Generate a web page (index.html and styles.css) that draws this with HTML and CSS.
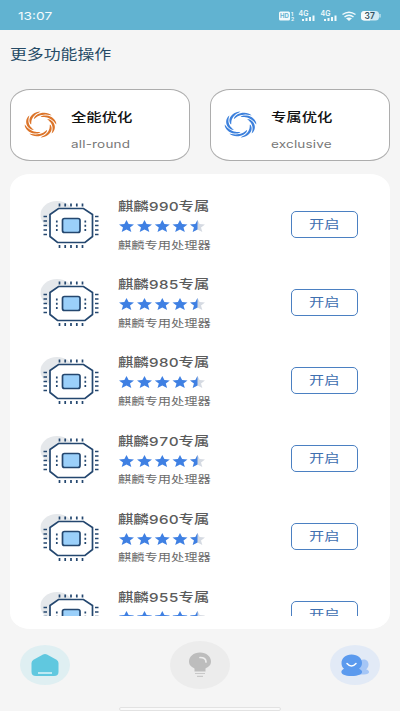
FILE: index.html
```html
<!DOCTYPE html>
<html lang="zh-CN">
<head>
<meta charset="utf-8">
<title>更多功能操作</title>
<link rel="stylesheet" href="styles.css">
</head>
<body>
<svg class="defs" aria-hidden="true">
  <symbol id="swirl" viewBox="-13 -13 26 26" preserveAspectRatio="none">
    <g id="blades"></g>
  </symbol>
  <symbol id="chip" viewBox="0 0 60 48">
    <ellipse cx="17" cy="15" rx="16.5" ry="14" fill="#e5e8eb"/>
    <path d="M18.500 8.500H43.500L52.500 14.500V36.500L45 42.500H17.500L10 36.500V14.500Z" fill="#fff" stroke="#24476f" stroke-width="1.700"/>
    <path d="M19.500 3.500v3M25.200 3.500v3M31 3.500v3M36.800 3.500v3M42.500 3.500v3M19.500 45v3M25.200 45v3M31 45v3M36.800 45v3M42.500 45v3M3.500 16.500h3.500M3.500 21h3.500M3.500 25.500h3.500M3.500 30h3.500M3.500 34.500h3.500M55 16.500h3.500M55 21h3.500M55 25.500h3.500M55 30h3.500M55 34.500h3.500" stroke="#24476f" stroke-width="1.700"/>
    <path d="M16.800 20.500v11M45.300 20.500v11" stroke="#24476f" stroke-width="1.700" stroke-dasharray="2 2.300"/>
    <rect x="22.500" y="18.500" width="17.500" height="14" rx="2" fill="#9bd0fa" stroke="#24476f" stroke-width="1.700"/>
  </symbol>
  <symbol id="stars" viewBox="0 0 88 12">
    <defs><path id="star" d="M7.500 0L9.600 4L15 4.500L11 7.600L12.300 12L7.500 9.600L2.700 12L4 7.600L0 4.500L5.400 4Z"/></defs>
    <g fill="#3f80e3"><use href="#star"/><use href="#star" x="18"/><use href="#star" x="35.800"/><use href="#star" x="53.500"/></g>
    <use href="#star" x="71" fill="#d5dae2"/>
    <path d="M78.500 0V9.600L73.700 12L75 7.600L71 4.500L76.400 4Z" fill="#3f80e3"/>
  </symbol>
</svg>
<header class="status">
  <span class="clock"><span class="wide">13:07</span></span>
  <svg class="signals" width="106" height="14" viewBox="0 0 106 14">
    <rect x="1" y="2.500" width="11" height="9" rx="1.500" fill="#f2fafc"/>
    <text x="2" y="9.400" class="hd">HD</text>
    <text x="13" y="6.500" class="tiny">1</text><text x="13" y="12" class="tiny">2</text>
    <text x="20.500" y="7" class="net">4G</text><text x="42.500" y="7" class="net">4G</text>
    <path d="M25 12v-2M28.500 12v-3M32 12v-4M35.500 12v-5.500M47 12v-2M50.500 12v-3M54 12v-4M57.500 12v-5.500" stroke="#f2fafc" stroke-width="2"/>
    <g fill="none" stroke="#f2fafc" stroke-width="1.500"><path d="M64.500 5.500Q71 .8 77.500 5.500M66.500 8Q71 4.500 75.500 8"/></g>
    <path d="M68 9.300Q71 7.700 74 9.300L71 12Z" fill="#f2fafc"/>
    <rect x="83" y="2" width="18" height="9.500" rx="3.500" fill="#cfe9f2"/><path d="M88 2H86.500A3.500 3.500 0 0 0 83 5.500V8a3.500 3.500 0 0 0 3.500 3.500H92V2Z" fill="#f4fafc"/>
    <path d="M102 5v3.500" stroke="#b9deea" stroke-width="1.500"/>
    <text x="86.500" y="9.700" class="battery">37</text>
  </svg>
</header>
<h1 class="heading"><span class="wide">更多功能操作</span></h1>
<section class="modes">
  <div class="mode orange"><svg class="swirl"><use href="#swirl"/></svg><div><b class="wide">全能优化</b><span class="wide">all-round</span></div></div>
  <div class="mode blue"><svg class="swirl"><use href="#swirl"/></svg><div><b class="wide">专属优化</b><span class="wide">exclusive</span></div></div>
</section>
<main class="panel"><div class="list" id="list"></div></main>
<nav class="tabs">
  <a class="tab home"><svg width="28" height="24" viewBox="0 0 28 24"><path d="M12 1.500Q14 .5 16 1.500L25.500 6.800Q27.500 8 27.500 10V19Q27.500 23 23 23H5Q.5 23 .5 19V10Q.5 8 2.500 6.800Z" fill="#60c8df"/><path d="M7 20h14" stroke="#c8edf5" stroke-width="1.800"/></svg></a>
  <a class="tab tips"><svg width="24" height="26" viewBox="0 0 24 26"><path d="M12 .5C18.500.5 23 4.500 23 9.500C23 13.500 20.500 14.500 17.500 16.500V19.500H6.500V16.500C3.500 14.500 1 13.500 1 9.500C1 4.500 5.500.5 12 .5Z" fill="#bdbdbd"/><path d="M12 5.500Q18 5.500 18 10" fill="none" stroke="#ededed" stroke-width="1.700" stroke-linecap="round"/><path d="M7 21.500h10M9 24.300h6" stroke="#c9c9c9" stroke-width="1.200"/></svg></a>
  <a class="tab users"><svg width="29" height="24" viewBox="0 0 29 24"><path d="M19 7.500C24 5 28 8 27.500 12C27.300 14.500 26 15.500 25 16.300C30 18 28.500 21.500 23 21.500H17Z" fill="#a5c6f6"/><path d="M10.500 1.500C17 1.500 21 5.500 21 10C21 12.800 19.500 14.700 18 15.800C24 18.500 21 23 10.500 23S-2 18.500 3 15.800C1.500 14.700.5 12.800.5 10C.5 5.500 4.500 1.500 10.500 1.500Z" fill="#5b9aee"/><path d="M6 10.500Q10.500 15.500 15 10.500" fill="none" stroke="#fff" stroke-width="1.500" stroke-linecap="round"/></svg></a>
</nav>
<div class="gesture"></div>
<script src="app.js"></script>
</body>
</html>
```
FILE: styles.css
```css
* { box-sizing: border-box; }
body {
  margin: 0;
  width: 400px;
  height: 711px;
  overflow: hidden;
  display: flex;
  flex-direction: column;
  background: #f5f5f5;
  font-family: Inter, "Noto Sans CJK SC", sans-serif;
}
.defs { position: absolute; width: 0; height: 0; }
.wide {
  display: block;
  width: max-content;
  white-space: nowrap;
  transform: scaleX(1.25);
  transform-origin: left center;
}
.status {
  flex: none;
  height: 30px;
  padding: 2px 16px 0 18px;
  display: flex;
  justify-content: space-between;
  align-items: center;
  background: #61b3d1;
}
.clock { color: #f4fbfd; font-size: 11px; line-height: 14px; }
.hd { font-size: 6px; font-weight: 700; fill: #61b3d1; }
.tiny { font-size: 5px; font-weight: 700; fill: #f2fafc; }
.net { font-size: 7px; font-weight: 600; fill: #f2fafc; }
.battery { font-size: 8.5px; font-weight: 600; fill: #31505f; }
.heading {
  flex: none;
  height: 59px;
  margin: 0;
  padding: 14px 0 0 10px;
  font-size: 13.5px;
  line-height: 20px;
  font-weight: 400;
  color: #264b66;
}
.modes { flex: none; display: flex; gap: 20px; padding: 0 10px; }
.mode {
  flex: 1;
  height: 72px;
  display: flex;
  padding: 0 0 0 13px;
  background: #fff;
  border: 1px solid #adadad;
  border-radius: 20px / 16px;
}
.swirl { width: 33px; height: 27px; margin: 21px 13.5px 0 0; }
.orange .swirl { color: #dc7429; }
.blue .swirl { color: #3c80dc; }
.mode b {
  margin-top: 18px;
  font-size: 12.3px;
  line-height: 20px;
  font-weight: 500;
  color: #111;
}
.mode span {
  margin-top: 9px;
  font-size: 10.8px;
  line-height: 16px;
  letter-spacing: .15px;
  color: #777;
}
.panel {
  flex: none;
  height: 455px;
  margin: 13px 10px 0;
  padding: 21px 0 12px 29.5px;
  background: #fff;
  border-radius: 20px / 16px;
}
.list { height: 421px; overflow: hidden; }
.item { height: 78.2px; display: flex; }
.chip { flex: none; width: 60px; height: 48px; margin-top: 5px; }
.info { width: 191.5px; padding-left: 18.5px; }
.name { font-size: 12.3px; line-height: 20px; font-weight: 500; color: #5c5c5c; padding-top: 2px; font-variant-numeric: tabular-nums; }
.stars { display: block; width: 88px; height: 12px; margin: 3px 0 0 1px; }
.desc { margin-top: 4.5px; font-size: 10.6px; line-height: 17px; color: #6c6c6c; }
.open {
  width: 67px;
  height: 27px;
  margin-top: 15.5px;
  padding: 0 0 0 17px;
  border: 1.5px solid #4b80c2;
  border-radius: 5px;
  background: #fff;
  font-family: inherit;
  font-size: 12.2px;
  line-height: 25px;
  color: #3f70b0;
}
.tabs {
  flex: none;
  height: 81px;
  padding: 11px 20px 0;
  display: flex;
  justify-content: space-between;
}
.tab {
  width: 50px;
  height: 40px;
  margin-top: 4.5px;
  display: flex;
  align-items: center;
  justify-content: center;
  border-radius: 50%;
}
.home { background: #dfeff2; }
.tips { width: 60px; height: 48px; margin-top: 1px; background: #ececec; }
.users { background: #e2eaf6; }
.gesture { flex: none; width: 162px; height: 4px; margin: -3px auto 0; border: 1px solid #e2e2e2; background: #fafafa; border-radius: 2px; }
```
FILE: app.js
```js
// Each blade spirals clockwise from the inner ring to the rim, tapering at both ends.
const blades = document.getElementById("blades");
const outer = [];
const inner = [];
for (let s = 0; s <= 12; s++) {
  const t = s / 12;
  const angle = t * Math.PI / 2;
  const radius = 7.4 + 5 * t;
  const half = 1.05 * Math.sin(Math.PI * t) ** 0.6;
  const at = r => `${(r * Math.cos(angle)).toFixed(2)},${(r * Math.sin(angle)).toFixed(2)}`;
  outer.push(at(radius + half));
  inner.unshift(at(radius - half));
}
const points = outer.concat(inner).join(" ");
for (let i = 0; i < 8; i++) {
  blades.innerHTML += `<polygon transform="rotate(${i * 45})" points="${points}" fill="currentColor"/>`;
}
document.getElementById("list").innerHTML = [990, 985, 980, 970, 960, 955].map(n => `
  <article class="item">
    <svg class="chip"><use href="#chip"/></svg>
    <div class="info">
      <div class="name"><span class="wide">麒麟${n}专属</span></div>
      <svg class="stars"><use href="#stars"/></svg>
      <div class="desc"><span class="wide">麒麟专用处理器</span></div>
    </div>
    <button class="open"><span class="wide">开启</span></button>
  </article>`).join("");
```
